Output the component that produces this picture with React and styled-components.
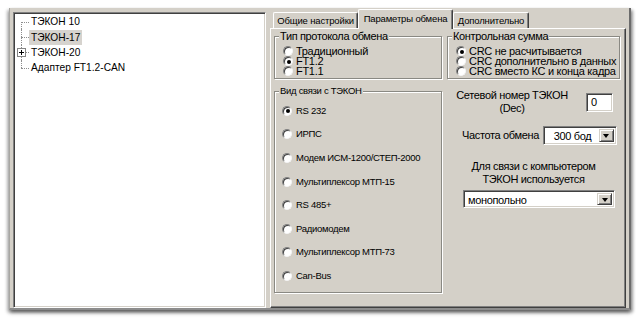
import React from "react";
import styled, { createGlobalStyle } from "styled-components";

const GlobalStyle = createGlobalStyle`
  html, body {
    margin: 0;
    padding: 0;
    background: #fff;
  }
  body {
    font-family: "Liberation Sans", Arial, sans-serif;
    color: #000;
  }
`;

const Page = styled.div`
  width: 640px;
  height: 318px;
  overflow: hidden;
  box-sizing: border-box;
  padding: 8px 0 0 9px;
`;

const Window = styled.div`
  width: 622px;
  height: 302px;
  box-sizing: border-box;
  display: flex;
  gap: 4px;
  padding: 0 3px;
  background: #d4d0c8;
  border-left: 1px solid #a7a6a2;
  border-right: 2px solid #6b6b6b;
  border-bottom: 2px solid #8c8c8c;
  box-shadow: 0 3px 4px rgba(0, 0, 0, 0.35), -2px 2px 3px rgba(0, 0, 0, 0.2),
    2px 2px 3px rgba(0, 0, 0, 0.3);
`;

/* ---------- tree ---------- */

const Tree = styled.div`
  width: 253px;
  margin-top: 4px;
  box-sizing: border-box;
  background: #fff;
  border: 1px solid;
  border-color: #808080 #fff #fff #808080;
  box-shadow: inset 1px 1px 0 #404040, inset -1px -1px 0 #d4d0c8;
  padding: 1px 0 0 1px;
`;

const TreeRow = styled.div`
  display: flex;
  height: 15.4px;
  align-items: center;
`;

const Connector = styled.span`
  position: relative;
  width: 14px;
  height: 100%;

  &::before {
    content: "";
    position: absolute;
    left: 6px;
    top: ${p => (p.$first ? "50%" : "0")};
    bottom: ${p => (p.$last ? "50%" : "0")};
    border-left: 1px dotted #8e8e8e;
  }
  &::after {
    content: "";
    position: absolute;
    left: 6px;
    right: 0;
    top: 50%;
    border-top: 1px dotted #8e8e8e;
  }
`;

const Expander = styled.svg`
  position: absolute;
  left: 2px;
  top: 3.5px;
  z-index: 1;
`;

const TreeLabel = styled.span`
  font-size: 10.2px;
  line-height: 15px;
  padding: 0 2px;
  margin-left: 0;
  background: ${p => (p.$selected ? "#d6d3ce" : "transparent")};
`;

const treeItems = [
  { name: "ТЭКОН 10" },
  { name: "ТЭКОН-17", selected: true },
  { name: "ТЭКОН-20", expandable: true },
  { name: "Адаптер FT1.2-CAN" },
];

/* ---------- tabs ---------- */

const TabColumn = styled.div`
  width: 356px;
  display: flex;
  flex-direction: column;
`;

const TabStrip = styled.div`
  height: 20px;
  display: flex;
  align-items: flex-end;
  padding-left: 3px;
`;

const Tab = styled.div`
  position: relative;
  z-index: ${p => (p.$active ? 2 : 1)};
  width: ${p => p.$w}px;
  height: ${p => (p.$active ? 20 : 16)}px;
  margin-bottom: ${p => (p.$active ? -1 : 0)}px;
  box-sizing: border-box;
  background: #d4d0c8;
  border-top: 1px solid #fff;
  border-left: 1px solid #fff;
  border-right: 1px solid #404040;
  box-shadow: inset -1px 0 0 #808080;
  border-radius: 2px 2px 0 0;
  font-size: 9.5px;
  letter-spacing: -0.15px;
  line-height: ${p => (p.$active ? 17 : 15)}px;
  text-align: center;
  white-space: nowrap;
`;

const TabPage = styled.div`
  flex: 1;
  box-sizing: border-box;
  border: 1px solid;
  border-color: #fff #404040 #404040 #fff;
  box-shadow: inset -1px -1px 0 #808080;
  padding: 1px 5px 0 3px;
  display: grid;
  grid-template-columns: 168px 173px;
  column-gap: 5px;
  row-gap: 6px;
  align-content: start;
`;

const Group = styled.fieldset`
  margin: 0;
  min-width: 0;
  padding: ${p => p.$pad};
  border: 1px solid #8a8983;
  box-shadow: inset 1px 1px 0 #fff, 1px 1px 0 #fff;
  display: flex;
  flex-direction: column;
`;

const Legend = styled.legend`
  position: relative;
  padding: 0 1px;
  margin-left: 4px;
  background: #d4d0c8;
  font-size: ${p => (p.$small ? "9.5px" : "11px")};
  letter-spacing: ${p => (p.$small ? "-0.3px" : "-0.35px")};
  line-height: ${p => (p.$small ? "12px" : "13px")};
`;

const RadioRow = styled.label`
  display: flex;
  align-items: center;
  height: ${p => p.$h}px;
  gap: ${p => (p.$small ? 4 : 3)}px;
  padding-left: ${p => (p.$small ? 7 : 8)}px;
  font-size: ${p => (p.$small ? "9.5px" : "11px")};
  letter-spacing: ${p => (p.$small ? "-0.3px" : "-0.3px")};
  line-height: 10px;
  white-space: nowrap;
`;

const Circle = styled.span`
  position: relative;
  flex: none;
  width: 10px;
  height: 10px;
  box-sizing: border-box;
  border-radius: 50%;
  background: #fff;
  border: 1px solid;
  border-color: #808080 #f4f4f4 #f4f4f4 #808080;
  box-shadow: inset 1px 1px 0 #404040;

  &::after {
    content: "";
    display: ${p => (p.$on ? "block" : "none")};
    position: absolute;
    left: 2.5px;
    top: 2.5px;
    width: 4px;
    height: 4px;
    border-radius: 50%;
    background: #000;
  }
`;

const Radio = ({ label, on, small, h }) => (
  <RadioRow $small={small} $h={h}>
    <Circle $on={on} />
    <span>{label}</span>
  </RadioRow>
);

/* ---------- right form ---------- */

const Form = styled.div`
  display: flex;
  flex-direction: column;
  padding-top: 4px;
  font-size: 11px;
  letter-spacing: -0.35px;
  line-height: 13px;
`;

const FormRow = styled.div`
  display: flex;
  align-items: ${p => p.$align || "center"};
  gap: ${p => p.$gap || 0}px;
  margin-top: ${p => p.$mt || 0}px;
  padding-left: ${p => p.$pl || 0}px;
`;

const CenterText = styled.div`
  width: ${p => p.$w};
  text-align: center;
`;

const sunken = `
  box-sizing: border-box;
  background: #fff;
  border: 1px solid;
  border-color: #808080 #fff #fff #808080;
  box-shadow: inset 1px 1px 0 #404040, inset -1px -1px 0 #d4d0c8;
`;

const NumberBox = styled.div`
  ${sunken}
  width: 27px;
  height: 19px;
  margin: 4px 0 0 9px;
  padding: 2px 0 0 4px;
`;

const Select = styled.div`
  ${sunken}
  display: flex;
  width: ${p => p.$w}px;
  height: ${p => p.$h}px;
  margin-left: ${p => p.$ml || 0}px;
  padding: 2px;
`;

const SelectValue = styled.div`
  flex: 1;
  padding-left: ${p => (p.$center ? 0 : 2)}px;
  text-align: ${p => (p.$center ? "center" : "left")};
  line-height: ${p => p.$lh}px;
`;

const DropButton = styled.div`
  width: 15px;
  box-sizing: border-box;
  background: #d4d0c8;
  border: 1px solid;
  border-color: #d4d0c8 #404040 #404040 #d4d0c8;
  box-shadow: inset 1px 1px 0 #fff, inset -1px -1px 0 #808080;
  display: flex;
  align-items: center;
  justify-content: center;

  &::after {
    content: "";
    border-left: 3.5px solid transparent;
    border-right: 3.5px solid transparent;
    border-top: 4px solid #000;
    margin-top: 1px;
  }
`;

const links = [
  "RS 232",
  "ИРПС",
  "Модем ИСМ-1200/СТЕП-2000",
  "Мультиплексор МТП-15",
  "RS 485+",
  "Радиомодем",
  "Мультиплексор МТП-73",
  "Can-Bus",
];

export default function App() {
  return (
    <>
      <GlobalStyle />
      <Page>
        <Window>
          <Tree>
            {treeItems.map((it, i) => (
              <TreeRow key={it.name}>
                <Connector $first={i === 0} $last={i === treeItems.length - 1}>
                  {it.expandable && (
                    <Expander width="9" height="9" viewBox="0 0 9 9">
                      <rect x="0.5" y="0.5" width="8" height="8" fill="#fff" stroke="#848484" />
                      <path d="M2 4.5h5M4.5 2v5" stroke="#000" />
                    </Expander>
                  )}
                </Connector>
                <TreeLabel $selected={it.selected}>{it.name}</TreeLabel>
              </TreeRow>
            ))}
          </Tree>

          <TabColumn>
            <TabStrip>
              <Tab $w={85}>Общие настройки</Tab>
              <Tab $w={95} $active>
                Параметры обмена
              </Tab>
              <Tab $w={76}>Дополнительно</Tab>
            </TabStrip>
            <TabPage>
              <Group $pad="3px 0 2px 0">
                <Legend>Тип протокола обмена</Legend>
                <Radio label="Традиционный" h={10} />
                <Radio label="FT1.2" h={10} on />
                <Radio label="FT1.1" h={10} />
              </Group>
              <Group $pad="3px 0 2px 0">
                <Legend>Контрольная сумма</Legend>
                <Radio label="CRC не расчитывается" h={10} on />
                <Radio label="CRC дополнительно в данных" h={10} />
                <Radio label="CRC вместо КС и конца кадра" h={10} />
              </Group>

              <Group $pad="2px 0 4px 0">
                <Legend $small>Вид связи с ТЭКОН</Legend>
                {links.map((l, i) => (
                  <Radio key={l} label={l} small h={23.6} on={i === 0} />
                ))}
              </Group>

              <Form>
                <FormRow $align="flex-start">
                  <CenterText $w="130px">
                    Сетевой номер ТЭКОН
                    <br />
                    (Dec)
                  </CenterText>
                  <NumberBox>0</NumberBox>
                </FormRow>
                <FormRow $mt={11} $pl={15} $gap={4}>
                  <span>Частота обмена</span>
                  <Select $w={74} $h={19}>
                    <SelectValue $center $lh={15}>
                      300 бод
                    </SelectValue>
                    <DropButton />
                  </Select>
                </FormRow>
                <FormRow $mt={15}>
                  <CenterText $w="173px">
                    Для связи с компьютером
                    <br />
                    ТЭКОН используется
                  </CenterText>
                </FormRow>
                <FormRow $mt={4}>
                  <Select $w={152} $h={18} $ml={16}>
                    <SelectValue $lh={14}>монопольно</SelectValue>
                    <DropButton />
                  </Select>
                </FormRow>
              </Form>
            </TabPage>
          </TabColumn>
        </Window>
      </Page>
    </>
  );
}
